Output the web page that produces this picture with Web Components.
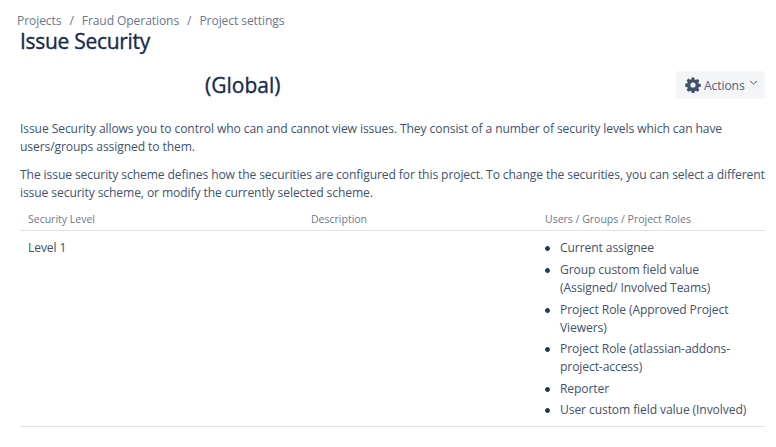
<!DOCTYPE html>
<html>
<head>
<meta charset="utf-8">
<style>
  html, body { margin: 0; background: #fff; }
  body { font-family: "Open Sans", "Noto Sans", sans-serif; color: #172b4d; }
</style>
</head>
<body>
<project-settings-page></project-settings-page>
<script>
class CrumbTrail extends HTMLElement {
  constructor() {
    super();
    this.attachShadow({ mode: "open" });
  }
  connectedCallback() {
    const items = this.getAttribute("items").split("|");
    this.shadowRoot.innerHTML = `
      <style>
        :host { display: flex; gap: 8px; padding-left: 17px; font-size: 12.1px; line-height: 16px; color: #6b778c; letter-spacing: -0.1px; }
      </style>
      ${items.map((t) => `<span>${t}</span>`).join("<span>/</span>")}
    `;
  }
}
customElements.define("crumb-trail", CrumbTrail);

class ActionsButton extends HTMLElement {
  constructor() {
    super();
    this.attachShadow({ mode: "open" });
  }
  connectedCallback() {
    this.shadowRoot.innerHTML = `
      <style>
        :host { display: flex; align-items: center; gap: 3px; width: 89px; height: 28px; box-sizing: border-box; padding-left: 9px; background: #f4f5f7; border-radius: 3px; font-size: 12.1px; color: #505f79; letter-spacing: -0.1px; }
        svg { display: block; flex: none; }
      </style>
      <svg width="16" height="16" viewBox="0 0 16 16"><path fill="#42526e" fill-rule="evenodd" d="M6.7.6h2.6l.4 2 1.2.5 1.7-1.100 1.800 1.800-1.100 1.700.5 1.200 2 .4v2.600l-2 .4-.5 1.200 1.100 1.700-1.800 1.800-1.700-1.100-1.200.5-.4 2H6.700l-.4-2-1.200-.5-1.700 1.100-1.800-1.800 1.100-1.700-.5-1.200-2-.4V6.700l2-.4.5-1.200-1.100-1.700 1.800-1.800 1.700 1.100 1.200-.5zM8 5.400a2.600 2.600 0 1 0 0 5.200 2.600 2.600 0 0 0 0-5.200z"/></svg>
      <span>Actions</span>
      <svg width="9" height="6" viewBox="0 0 9 6" style="margin:-4px 0 0 1px"><path d="M1 1l3.500 3L8 1" fill="none" stroke="#505f79" stroke-width="1"/></svg>
    `;
  }
}
customElements.define("actions-button", ActionsButton);

class SecurityTable extends HTMLElement {
  constructor() {
    super();
    this.attachShadow({ mode: "open" });
  }
  connectedCallback() {
    this.shadowRoot.innerHTML = `
      <style>
        :host { display: block; margin: 0 11px 0 20px; font-size: 12.1px; line-height: 18px; letter-spacing: -0.1px; color: #42526e; }
        .row { display: grid; grid-template-columns: 283px 234px 1fr; padding-left: 8px; }
        .head { font-size: 10.5px; font-weight: 500; color: #6b778c; line-height: 16px; padding-top: 3px; padding-bottom: 3px; border-bottom: 1px solid #dfe1e6; letter-spacing: 0; }
        .body { padding-top: 8px; padding-bottom: 6.6px; border-bottom: 1px solid #dfe1e6; }
        ul { margin: 0; padding: 0; list-style: none; }
        li { margin-bottom: 3.8px; padding-left: 15px; background: radial-gradient(circle 2.4px at 2.5px 9.5px, #253858 90%, transparent 100%) no-repeat; }
        li:last-child { margin-top: -0.6px; margin-bottom: 0; }
      </style>
      <div class="row head"><span>Security Level</span><span>Description</span><span>Users / Groups / Project Roles</span></div>
      <div class="row body">
        <span>Level 1</span>
        <span></span>
        <ul>
          <li>Current assignee</li>
          <li>Group custom field value<br>(Assigned/ Involved Teams)</li>
          <li>Project Role (Approved Project<br>Viewers)</li>
          <li>Project Role (atlassian-addons-<br>project-access)</li>
          <li>Reporter</li>
          <li>User custom field value (Involved)</li>
        </ul>
      </div>
    `;
  }
}
customElements.define("security-table", SecurityTable);

class ProjectSettingsPage extends HTMLElement {
  constructor() {
    super();
    this.attachShadow({ mode: "open" });
  }
  connectedCallback() {
    this.shadowRoot.innerHTML = `
      <style>
        :host { display: block; padding-top: 13px; }
        h1 { margin: 0 0 0 20px; font-size: 21px; line-height: 24px; font-weight: 500; color: #172b4d; letter-spacing: -0.3px; -webkit-text-stroke: 0.35px #172b4d; }
        .scheme { display: flex; justify-content: space-between; align-items: center; margin: 18px 11px 0 20px; }
        h2 { margin: 0 0 0 185px; font-size: 21px; line-height: 28px; font-weight: 500; color: #172b4d; letter-spacing: 0; -webkit-text-stroke: 0.35px #172b4d; }
        p { margin: 0 0 0 20px; font-size: 12.1px; line-height: 18px; color: #42526e; letter-spacing: -0.1px; white-space: nowrap; }
        .intro { margin-top: 21px; }
        .second { margin-top: 10px; }
        security-table { margin-top: 6px; }
      </style>
      <crumb-trail items="Projects|Fraud Operations|Project settings"></crumb-trail>
      <h1>Issue Security</h1>
      <div class="scheme">
        <h2>(Global)</h2>
        <actions-button></actions-button>
      </div>
      <p class="intro">Issue Security allows you to control who can and cannot view issues. They consist of a number of security levels which can have<br>users/groups assigned to them.</p>
      <p class="second">The issue security scheme defines how the securities are configured for this project. To change the securities, you can select a different<br>issue security scheme, or modify the currently selected scheme.</p>
      <security-table></security-table>
    `;
  }
}
customElements.define("project-settings-page", ProjectSettingsPage);
</script>
</body>
</html>
